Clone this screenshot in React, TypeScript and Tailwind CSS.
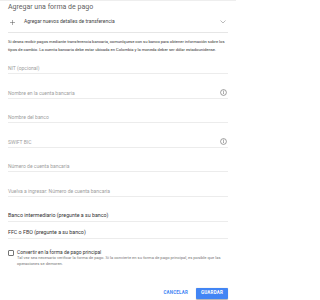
import React from 'react';

const InfoIcon = () => (
  <svg width="7" height="7" viewBox="0 0 24 24" fill="none" stroke="#757575" strokeWidth="2.4">
    <circle cx="12" cy="12" r="10" />
    <path d="M12 11v6" />
    <path d="M12 7.2v.6" strokeLinecap="round" strokeWidth="3" />
  </svg>
);

interface FieldProps {
  label: string;
  info?: boolean;
  h: string;
}

const Field: React.FC<FieldProps> = ({ label, info, h }) => (
  <div className={`${h} flex items-end justify-between border-b border-[#ececec] pb-[2px]`}>
    <span className="text-[5px] leading-[6px] text-[#a0a0a0]">{label}</span>
    {info && (
      <span className="mr-[1px] flex">
        <InfoIcon />
      </span>
    )}
  </div>
);

export default function App() {
  return (
    <div
      className="w-[236px] h-[300px] bg-white overflow-hidden border-t border-[#eeeeee] px-[8px]"
      style={{ fontFamily: 'Roboto, "Liberation Sans", sans-serif' }}
    >
      <h1 className="pt-[1px] text-[7px] leading-[10px] text-[#5f5f5f]">Agregar una forma de pago</h1>

      <div className="h-[21px] flex items-center justify-between border-b border-[#e6e6e6]">
        <div className="flex items-center">
          <svg width="5" height="5" viewBox="0 0 10 10" stroke="#555" strokeWidth="1" className="ml-[2px] mr-[9px]">
            <path d="M5 0v10M0 5h10" />
          </svg>
          <span className="text-[5px] text-[#444]">Agregar nuevos detalles de transferencia</span>
        </div>
        <svg width="6" height="4" viewBox="0 0 12 8" fill="none" stroke="#9e9e9e" strokeWidth="1.4" className="mr-[2px]">
          <path d="M1 1l5 5 5-5" />
        </svg>
      </div>

      <p className="mt-[5px] text-[4.1px] leading-[8px] text-[#333]">
        Si desea recibir pagos mediante transferencia bancaria, comuníquese con su banco para obtener información sobre los tipos de cambio. La cuenta bancaria debe estar ubicada en Colombia y la moneda deber ser dólar estadounidense.
      </p>

      <Field label="NIT (opcional)" h="h-[20px]" />
      <Field label="Nombre en la cuenta bancaria" info h="h-[24.5px]" />
      <Field label="Nombre del banco" h="h-[24.5px]" />
      <Field label="SWIFT BIC" info h="h-[24.5px]" />
      <Field label="Número de cuenta bancaria" h="h-[24.5px]" />
      <Field label="Vuelva a ingresar: Número de cuenta bancaria" h="h-[24.5px]" />

      <div className="h-[25px] flex items-end border-b border-[#ececec] pb-[1.5px]">
        <span className="text-[5.3px] leading-[7px] text-[#333]">Banco intermediario (pregunte a su banco)</span>
      </div>
      <div className="h-[17px] flex items-end border-b border-[#ececec] pb-[1.5px]">
        <span className="text-[5.3px] leading-[7px] text-[#333]">FFC o FBO (pregunte a su banco)</span>
      </div>

      <div className="mt-[10px] flex">
        <div className="mt-[1px] w-[6px] h-[6px] shrink-0 border border-[#757575] rounded-[1px]" />
        <div className="ml-[3px]">
          <div className="text-[4.9px] leading-[6px] text-[#333]">Convertir en la forma de pago principal</div>
          <div className="text-[4.1px] leading-[6.5px] text-[#777]">
            Tal vez sea necesario verificar la forma de pago. Si la convierte en su forma de pago principal, es posible que las operaciones se demoren.
          </div>
        </div>
      </div>

      <div className="mt-[20px] flex items-center justify-end">
        <button className="text-[4.5px] font-bold tracking-[0.2px] text-[#4285f4] mr-[8px]">CANCELAR</button>
        <button className="w-[32px] h-[11px] bg-[#4285f4] text-white text-[4.5px] font-bold tracking-[0.2px] rounded-[1px] shadow-[0_0.5px_1px_rgba(0,0,0,0.3)]">
          GUARDAR
        </button>
      </div>
    </div>
  );
}
